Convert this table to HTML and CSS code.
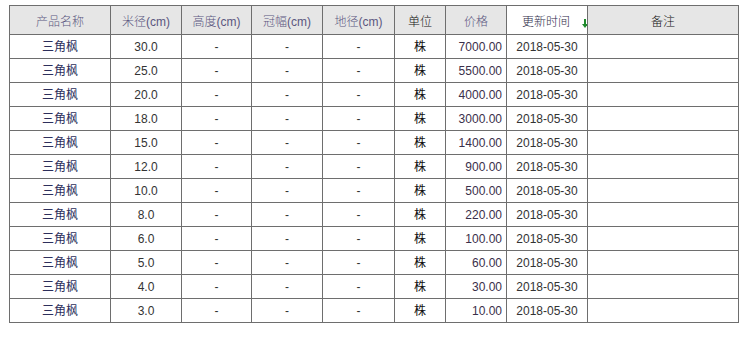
FILE: index.html
```html
<!DOCTYPE html>
<html lang="zh">
<head>
<meta charset="utf-8">
<link rel="stylesheet" href="styles.css">
</head>
<body>
<table class="price-table">
  <colgroup>
    <col class="c1"><col class="c2"><col class="c3"><col class="c4"><col class="c5"><col class="c6"><col class="c7"><col class="c8"><col class="c9">
  </colgroup>
  <thead>
    <tr>
      <th class="link">产品名称</th>
      <th class="link">米径(cm)</th>
      <th class="link">高度(cm)</th>
      <th class="link">冠幅(cm)</th>
      <th class="link">地径(cm)</th>
      <th>单位</th>
      <th class="link">价格</th>
      <th class="link active">更新时间<svg class="arrow" width="6" height="9" viewBox="0 0 6 9"><rect x="2" y="0" width="2" height="6" fill="#1f8a2c"/><path d="M0 5 L6 5 L3 9 Z" fill="#1f8a2c"/></svg></th>
      <th>备注</th>
    </tr>
  </thead>
  <tbody>
    <tr><td class="name">三角枫</td><td>30.0</td><td>-</td><td>-</td><td>-</td><td class="unit">株</td><td class="price">7000.00</td><td>2018-05-30</td><td></td></tr>
    <tr><td class="name">三角枫</td><td>25.0</td><td>-</td><td>-</td><td>-</td><td class="unit">株</td><td class="price">5500.00</td><td>2018-05-30</td><td></td></tr>
    <tr><td class="name">三角枫</td><td>20.0</td><td>-</td><td>-</td><td>-</td><td class="unit">株</td><td class="price">4000.00</td><td>2018-05-30</td><td></td></tr>
    <tr><td class="name">三角枫</td><td>18.0</td><td>-</td><td>-</td><td>-</td><td class="unit">株</td><td class="price">3000.00</td><td>2018-05-30</td><td></td></tr>
    <tr><td class="name">三角枫</td><td>15.0</td><td>-</td><td>-</td><td>-</td><td class="unit">株</td><td class="price">1400.00</td><td>2018-05-30</td><td></td></tr>
    <tr><td class="name">三角枫</td><td>12.0</td><td>-</td><td>-</td><td>-</td><td class="unit">株</td><td class="price">900.00</td><td>2018-05-30</td><td></td></tr>
    <tr><td class="name">三角枫</td><td>10.0</td><td>-</td><td>-</td><td>-</td><td class="unit">株</td><td class="price">500.00</td><td>2018-05-30</td><td></td></tr>
    <tr><td class="name">三角枫</td><td>8.0</td><td>-</td><td>-</td><td>-</td><td class="unit">株</td><td class="price">220.00</td><td>2018-05-30</td><td></td></tr>
    <tr><td class="name">三角枫</td><td>6.0</td><td>-</td><td>-</td><td>-</td><td class="unit">株</td><td class="price">100.00</td><td>2018-05-30</td><td></td></tr>
    <tr><td class="name">三角枫</td><td>5.0</td><td>-</td><td>-</td><td>-</td><td class="unit">株</td><td class="price">60.00</td><td>2018-05-30</td><td></td></tr>
    <tr><td class="name">三角枫</td><td>4.0</td><td>-</td><td>-</td><td>-</td><td class="unit">株</td><td class="price">30.00</td><td>2018-05-30</td><td></td></tr>
    <tr><td class="name">三角枫</td><td>3.0</td><td>-</td><td>-</td><td>-</td><td class="unit">株</td><td class="price">10.00</td><td>2018-05-30</td><td></td></tr>
  </tbody>
</table>
</body>
</html>
```

FILE: styles.css
```css
html, body {
  margin: 0;
  padding: 0;
  background: #fff;
}
body {
  padding: 5px 0 0 9px;
  font-family: "Liberation Sans", "Noto Sans CJK SC", sans-serif;
  font-size: 12px;
  color: #333;
}
.price-table {
  border-collapse: collapse;
  table-layout: fixed;
  width: 729px;
}
.c1 { width: 101px; }
.c2 { width: 71px; }
.c3 { width: 70px; }
.c4 { width: 71px; }
.c5 { width: 72px; }
.c6 { width: 51px; }
.c7 { width: 61px; }
.c8 { width: 81px; }
.c9 { width: 151px; }
.price-table th,
.price-table td {
  border: 1px solid #6e6e6e;
  padding: 0 4px;
  text-align: center;
  white-space: nowrap;
  overflow: hidden;
}
.price-table thead tr { height: 29px; }
.price-table tbody tr { height: 24px; }
.price-table th {
  background: #e6e6e6;
  font-weight: 300;
  color: #111;
}
.price-table th.link { color: #5b5680; }
.price-table th.active {
  background: #fff;
  color: #2c2a48;
  text-align: left;
  padding-left: 15px;
  padding-right: 0;
}
.arrow {
  margin-left: 12px;
  vertical-align: -2px;
}
.price-table td.name {
  color: #2d2f5c;
  padding-bottom: 3px;
}
.price-table td.unit {
  color: #111;
  padding-bottom: 3px;
}
.price-table td.price {
  text-align: right;
  padding-right: 4px;
  color: #3a2f4a;
}
```
